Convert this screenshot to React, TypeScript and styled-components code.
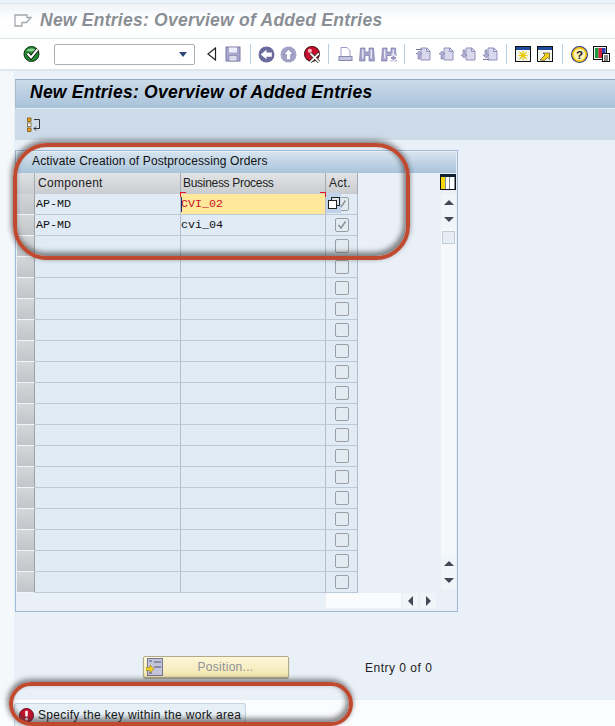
import styled, { createGlobalStyle } from "styled-components";

const GlobalStyle = createGlobalStyle`
  html, body { margin: 0; padding: 0; background: #e9f0f7; }
  body { font-family: "Liberation Sans", Arial, sans-serif; }
`;

const ROW_COUNT = 19;
const rows = [
  { component: "AP-MD", process: "CVI_02", checked: true, error: true },
  { component: "AP-MD", process: "cvi_04", checked: true, error: false },
];

const Page = styled.div`
  position: relative;
  width: 615px;
  height: 726px;
  overflow: hidden;
  display: flex;
  flex-direction: column;
  background: #e9f0f7;
`;

const TitleBar = styled.div`
  margin-top: 3px;
  border-top: 1px solid #e3e8ec;
  border-bottom: 1px solid #dde2e6;
  box-sizing: border-box;
  height: 36px;
  display: flex;
  align-items: center;
  gap: 8px;
  padding: 0 0 2px 14px;
  background: linear-gradient(#eef2f7, #ffffff 45%, #fdfefe);
`;

const WindowTitle = styled.div`
  font-size: 17.5px;
  letter-spacing: 0.25px;
  font-weight: bold;
  font-style: italic;
  color: #8a8f96;
  white-space: nowrap;
`;

const Toolbar = styled.div`
  height: 30px;
  border-bottom: 2px solid #e1e6ea;
  display: flex;
  align-items: center;
  background: #fff;
  padding-left: 21px;
  flex-shrink: 0;
`;

const Tool = styled.div<{ $w?: number }>`
  width: ${(p) => p.$w ?? 22}px;
  height: 22px;
  display: flex;
  align-items: center;
  justify-content: center;
  flex-shrink: 0;
`;

const Sep = styled.div`
  width: 1px;
  height: 20px;
  background: #b9cfe2;
  margin: 0 6px 0 5px;
  flex-shrink: 0;
`;

const Combo = styled.div`
  width: 141px;
  height: 21px;
  margin-left: 11px;
  margin-right: 8px;
  border: 1px solid #a9afb5;
  border-radius: 2px;
  background: #fff;
  display: flex;
  align-items: center;
  justify-content: flex-end;
  padding-right: 7px;
  box-sizing: border-box;
  flex-shrink: 0;
`;

const ComboArrow = styled.div`
  width: 0;
  height: 0;
  border-left: 4px solid transparent;
  border-right: 4px solid transparent;
  border-top: 5px solid #2c4a78;
`;

const Body = styled.div`
  flex: 1;
  display: flex;
  min-height: 0;
`;

const Rail = styled.div`
  width: 14px;
  background: #f5f8fb;
  flex-shrink: 0;
`;

const Main = styled.div`
  flex: 1;
  min-width: 0;
  padding: 8px 0 0 1px;
  display: flex;
  flex-direction: column;
`;

const PanelHeader = styled.div`
  height: 30px;
  box-sizing: border-box;
  border-top: 1px solid #93a9bc;
  border-left: 1px solid #a6bccf;
  border-bottom: 1px solid #e4edf5;
  display: flex;
  align-items: center;
  padding: 0 0 4px 14px;
  background: linear-gradient(#cbdbe9, #a9c2d9);
  font-size: 17.5px;
  letter-spacing: 0.25px;
  font-weight: bold;
  font-style: italic;
  color: #000;
`;

const SubToolbar = styled.div`
  height: 31px;
  background: #cddbe8;
  display: flex;
  align-items: center;
  padding-left: 12px;
  flex-shrink: 0;
`;

const GroupBox = styled.div`
  margin-top: 10px;
  width: 443px;
  height: 462px;
  box-sizing: border-box;
  border: 1px solid #9dbad8;
  padding: 1px;
  display: flex;
  flex-direction: column;
`;

const GroupTitle = styled.div`
  height: 21px;
  flex-shrink: 0;
  display: flex;
  align-items: center;
  padding: 0 0 3px 15px;
  box-sizing: border-box;
  font-size: 12px;
  letter-spacing: 0.13px;
  color: #111;
  background: linear-gradient(#d7e4ef, #a9c3da);
`;

const TableArea = styled.div`
  flex: 1;
  display: flex;
  min-height: 0;
`;

const Table = styled.div`
  width: 341px;
  flex-shrink: 0;
  display: flex;
  flex-direction: column;
`;

const HeaderRow = styled.div`
  display: flex;
  height: 21px;
  flex-shrink: 0;
`;

const Corner = styled.div`
  width: 18px;
  background: linear-gradient(#dfe1e3, #c9ccd0);
  border-right: 1px solid #a5aab0;
  box-sizing: border-box;
`;

const HeaderCell = styled.div<{ $w: number; $track: number; $pad: number }>`
  width: ${(p) => p.$w}px;
  box-sizing: border-box;
  border-right: 1px solid #a5aab0;
  background: linear-gradient(#e2e3e5, #c9ccd0);
  font-size: 12px;
  letter-spacing: ${(p) => p.$track}px;
  color: #222;
  padding: 3px 0 0 ${(p) => p.$pad}px;
  white-space: nowrap;
`;

const Row = styled.div`
  display: flex;
  height: 21px;
  flex-shrink: 0;
`;

const Selector = styled.div`
  width: 18px;
  box-sizing: border-box;
  background: linear-gradient(#d4d6d9, #c2c5c9);
  border-right: 1px solid #9da2a8;
  border-bottom: 1px solid #f2f4f6;
`;

const Cell = styled.div<{ $w: number; $pad: number; $error?: boolean }>`
  position: relative;
  width: ${(p) => p.$w}px;
  box-sizing: border-box;
  border-right: 1px solid #b4bec8;
  border-bottom: 1px solid #bccad7;
  background: ${(p) => (p.$error ? "#ffe89a" : "#e0ebf5")};
  color: ${(p) => (p.$error ? "#c8102e" : "#111")};
  font-family: "Liberation Mono", "Courier New", monospace;
  font-size: 11.7px;
  line-height: 20px;
  padding-left: ${(p) => p.$pad}px;
  white-space: pre;
`;

const ErrorMark = styled.div<{ $right?: boolean }>`
  position: absolute;
  ${(p) => (p.$right ? "right: -1px;" : "left: -1px;")}
  top: -2px;
  width: 5px;
  height: 4px;
  border-top: 1px solid #e8131f;
  ${(p) => (p.$right ? "border-right" : "border-left")}: 1px solid #e8131f;
`;

const Caret = styled.div`
  position: absolute;
  left: 0;
  top: 3px;
  width: 1px;
  height: 15px;
  background: #1a2a6c;
`;

const CheckCell = styled.div`
  position: relative;
  width: 32px;
  box-sizing: border-box;
  border-right: 1px solid #b4bec8;
  border-bottom: 1px solid #bccad7;
  background: #e0ebf5;
  display: flex;
  align-items: center;
  justify-content: center;
`;

const CheckBox = styled.div`
  width: 12px;
  height: 12px;
  border: 1px solid #9b9fa3;
  border-radius: 2px;
  background: #e3ebf2;
  display: flex;
  align-items: center;
  justify-content: center;
`;

const RestoreButton = styled.div`
  position: absolute;
  left: 0;
  top: -1px;
  width: 15px;
  height: 20px;
  background: #bfd3ea;
  display: flex;
  align-items: center;
  justify-content: center;
`;

const TableBottom = styled.div`
  display: flex;
  justify-content: flex-end;
  height: 16px;
`;

const HScrollRow = styled.div`
  display: flex;
  width: 110px;
  margin-right: -78px;
  flex-shrink: 0;
  position: relative;
`;

const HTrack = styled.div`
  width: 75px;
  height: 15px;
  background: #f9fbfd;
`;

const ScrollBtn = styled.div<{ $gap?: number }>`
  width: 15px;
  height: 15px;
  margin-left: ${(p) => p.$gap ?? 0}px;
  background: #f0f5f9;
  display: flex;
  align-items: center;
  justify-content: center;
  flex-shrink: 0;
`;

const VScrollBtn = styled(ScrollBtn)`
  height: 17px;
`;

const Arrow = styled.div<{ $dir: "up" | "down" | "left" | "right" }>`
  width: 0;
  height: 0;
  ${(p) =>
    p.$dir === "up"
      ? "border-left:5px solid transparent;border-right:5px solid transparent;border-bottom:5px solid #3f4a55;"
      : p.$dir === "down"
        ? "border-left:5px solid transparent;border-right:5px solid transparent;border-top:5px solid #3f4a55;"
        : p.$dir === "left"
          ? "border-top:5px solid transparent;border-bottom:5px solid transparent;border-right:5px solid #3f4a55;"
          : "border-top:5px solid transparent;border-bottom:5px solid transparent;border-left:5px solid #3f4a55;"}
`;

const ScrollColumn = styled.div`
  flex: 1;
  display: flex;
  flex-direction: column;
  align-items: flex-end;
  padding-bottom: 21px;
`;

const ConfigButton = styled.div`
  width: 16px;
  height: 16px;
  margin-bottom: 4px;
  border: 1px solid #111;
  box-sizing: border-box;
  display: flex;
  margin-top: 1px;
  flex-shrink: 0;
  background: #fff;
  border-top-width: 3px;
  border-top-color: #123;
`;

const ConfigStripe = styled.div<{ $c: string }>`
  flex: 1;
  background: ${(p) => p.$c};
  border-right: 1px solid #7f8f9f;
`;

const VTrack = styled.div`
  width: 15px;
  flex: 1;
  background: #f4f8fb;
  position: relative;
`;

const VThumb = styled.div`
  position: absolute;
  top: 3px;
  left: 1px;
  width: 13px;
  height: 13px;
  border: 1px solid #c1ccd6;
  box-sizing: border-box;
  background: #e6edf4;
`;

const Footer = styled.div`
  display: flex;
  align-items: flex-end;
  margin-top: 44px;
  padding-left: 128px;
  height: 22px;
`;

const PositionButton = styled.div`
  width: 146px;
  height: 22px;
  box-sizing: border-box;
  border: 1px solid #b1ab8c;
  border-radius: 2px;
  background: linear-gradient(#fdf7da, #f2e6ae);
  box-shadow: 0 1px 1px #a9a592;
  display: flex;
  align-items: center;
  color: #8d9198;
  font-size: 12px;
  letter-spacing: 0.3px;
`;

const PositionIcon = styled.div`
  width: 17px;
  height: 18px;
  margin-left: 2px;
  display: flex;
`;

const PositionLabel = styled.div`
  flex: 1;
  text-align: center;
`;

const EntryCount = styled.div`
  margin-left: 76px;
  font-size: 12px;
  color: #222;
  letter-spacing: 0.5px;
  line-height: 16px;
  margin-bottom: 2px;
`;

const StatusBar = styled.div`
  height: 26px;
  flex-shrink: 0;
  background: #fbfcfe;
  display: flex;
  align-items: flex-end;
  padding-left: 14px;
`;

const MessageTab = styled.div`
  width: 232px;
  height: 23px;
  box-sizing: border-box;
  border: 1px solid #c3d4e4;
  border-bottom: none;
  border-radius: 3px 3px 0 0;
  background: #e7eff6;
  display: flex;
  align-items: center;
  gap: 4px;
  padding-left: 4px;
  font-size: 12px;
  letter-spacing: 0.33px;
  color: #111;
  white-space: nowrap;
`;

const Callout = styled.div`
  position: absolute;
  box-sizing: border-box;
  border: 4px solid #bf4a30;
  pointer-events: none;
  box-shadow: -1px -2px 5px 1px rgba(60, 60, 60, 0.6), inset -2px -3px 5px 1px rgba(60, 60, 60, 0.6);
`;

const TableCallout = styled(Callout)`
  left: 13px;
  top: 143px;
  width: 397px;
  height: 117px;
  border-radius: 34px;
`;

const StatusCallout = styled(Callout)`
  left: 9px;
  top: 682px;
  width: 344px;
  height: 44px;
  border-radius: 22px;
`;

const Check = () => (
  <svg width="18" height="18" viewBox="0 0 18 18">
    <circle cx="8.5" cy="9" r="7.5" fill="#1f8a2f" stroke="#0c2d12" />
    <path d="M3 5.5a7 5 0 0 1 11 0a9 4 0 0 1-11 0z" fill="#8fd39a" />
    <path d="M4.5 8.5l3.5 4 6.5-8" fill="none" stroke="#111" strokeWidth="3.6" />
    <path d="M4.5 8.5l3.5 4 6.5-8" fill="none" stroke="#fff" strokeWidth="2" />
  </svg>
);

const BackTriangle = () => (
  <svg width="12" height="14" viewBox="0 0 12 14">
    <path d="M9.5 1L2 7l7.5 6z" fill="#fff" stroke="#222" strokeWidth="1.2" />
  </svg>
);

const Save = () => (
  <svg width="16" height="16" viewBox="0 0 16 16">
    <rect x="1" y="1" width="14" height="14" fill="#a9a6cf" stroke="#7d7aa8" />
    <rect x="4" y="1.5" width="8" height="5" fill="#eeeef8" />
    <rect x="4" y="9.5" width="8" height="5.5" fill="#dcdcec" stroke="#7d7aa8" strokeWidth="0.6" />
  </svg>
);

const NavCircle = ({ dir }: { dir: "left" | "up" }) => (
  <svg width="17" height="17" viewBox="0 0 16 16">
    <circle cx="8" cy="8" r="7.5" fill={dir === "left" ? "#6b6a9c" : "#a3a3c8"} />
    {dir === "left" ? (
      <path d="M2.5 8L8 3.5V6h5v4H8v2.5z" fill="#fff" />
    ) : (
      <path d="M8 3l4.5 5H10v5H6V8H3.5z" fill="#fff" stroke="#6b6a9c" strokeWidth="0.5" />
    )}
  </svg>
);

const CancelCircle = () => (
  <svg width="17" height="17" viewBox="0 0 16 16">
    <circle cx="7.5" cy="7.5" r="7" fill="#c8102e" stroke="#4a0a10" />
    <circle cx="5.5" cy="4.5" r="2" fill="#f7b5bd" />
    <path d="M6 7l8 8M14 7l-8 8" stroke="#333" strokeWidth="3" />
    <path d="M6 7l8 8M14 7l-8 8" stroke="#fff" strokeWidth="1.6" />
  </svg>
);

const Printer = () => (
  <svg width="15" height="16" viewBox="0 0 15 16">
    <path d="M3 1.5h6l3 3v6H3z" fill="#fff" stroke="#9e9cc4" />
    <rect x="1" y="10.5" width="13" height="4" fill="#c7c6e0" stroke="#8a88b2" />
  </svg>
);

const Binoculars = ({ plus }: { plus?: boolean }) => (
  <svg width="17" height="16" viewBox="0 0 17 16">
    <path d="M1.5 2h4.5v4h4V2h4.5l1 13h-5.5V9.5h-4V15H.5z" fill="#a6a4cd" stroke="#7c7aa8" strokeWidth="0.7" />
    <rect x="3" y="3.5" width="1.5" height="9" fill="#e5e5f3" />
    <rect x="11.5" y="3.5" width="1.5" height="9" fill="#e5e5f3" />
    {plus && <path d="M12.5 8.5v7M9 12h7" stroke="#fff" strokeWidth="4" />}
    {plus && <path d="M12.5 9.5v5M10 12h5" stroke="#9795c4" strokeWidth="2" />}
  </svg>
);

const PageArrow = ({ up, double }: { up: boolean; double?: boolean }) => (
  <svg width="16" height="14" viewBox="0 0 16 14">
    <path d="M6 1h6l3 3v9H6z" fill="#d9d8ec" stroke="#9391bd" />
    <path d="M11.5 1v3.5H15" fill="none" stroke="#9391bd" />
    <path
      d={up ? "M4 4l3 3H5v5H3V7H1z" : "M4 11L1 8h2V3h2v5h2z"}
      fill="#b7b6d8"
      stroke="#7775a4"
      strokeWidth="0.6"
    />
    {double && (
      <path d={up ? "M1 2.5h6" : "M1 12.5h6"} stroke="#7775a4" strokeWidth="1" />
    )}
  </svg>
);

const NewSession = () => (
  <svg width="16" height="16" viewBox="0 0 16 16">
    <rect x="0.5" y="0.5" width="15" height="15" fill="#f4f4ee" stroke="#111" />
    <rect x="1" y="1" width="14" height="3" fill="#1f4d9b" />
    <path d="M8 5v9M3.5 9.5h9M4.5 6l7 7M11.5 6l-7 7" stroke="#e7c900" strokeWidth="1.1" />
  </svg>
);

const Shortcut = () => (
  <svg width="16" height="16" viewBox="0 0 16 16">
    <rect x="0.5" y="0.5" width="15" height="15" fill="#f4f4ee" stroke="#111" />
    <rect x="1" y="1" width="14" height="3" fill="#1f4d9b" />
    <path d="M3 14l5-5-2-2h6.5v6.5l-2-2-3 3z" fill="#f4cf17" stroke="#333" strokeWidth="0.6" />
  </svg>
);

const Help = () => (
  <svg width="17" height="17" viewBox="0 0 16 16">
    <circle cx="8" cy="8" r="7.5" fill="#f8c30a" stroke="#24418a" />
    <circle cx="8" cy="8" r="5.5" fill="#fff3b5" />
    <text x="8" y="12" textAnchor="middle" fontSize="11" fontWeight="bold" fontFamily="Liberation Sans" fill="#222">?</text>
  </svg>
);

const Layout = () => (
  <svg width="17" height="16" viewBox="0 0 17 16">
    <rect x="0.5" y="0.5" width="13" height="13" fill="#eee" stroke="#111" />
    <rect x="2" y="2" width="3.5" height="10" fill="#1c9a3b" />
    <rect x="5.5" y="2" width="3.5" height="10" fill="#d21f3c" />
    <rect x="9" y="2" width="3.5" height="10" fill="#2d3fb8" />
    <rect x="9.5" y="7.5" width="7" height="8" fill="#fff" stroke="#111" />
    <path d="M11 10h4M11 12h4M11 14h4" stroke="#111" />
  </svg>
);

const SelectTree = () => (
  <svg width="14" height="16" viewBox="0 0 14 16">
    <rect x="0.5" y="1" width="3.5" height="3.5" fill="#f0a020" stroke="#6b4a10" strokeWidth="0.7" />
    <rect x="0.5" y="6" width="3.5" height="3.5" fill="#fff" stroke="#6b4a10" strokeWidth="0.7" />
    <rect x="0.5" y="11" width="3.5" height="3.5" fill="#f0a020" stroke="#6b4a10" strokeWidth="0.7" />
    <path d="M7 2.5h5.5v9H7M9 9.5l-2 2 2 2" fill="none" stroke="#222" strokeWidth="0.9" />
  </svg>
);

const TitleIcon = () => (
  <svg width="18" height="15" viewBox="0 0 18 15">
    <path d="M1 2h12v2.5h4l-4.5 5H8V13H1z" fill="none" stroke="#a2a7ad" strokeWidth="1.3" />
  </svg>
);

const Restore = () => (
  <svg width="12" height="12" viewBox="0 0 12 12">
    <rect x="3.5" y="0.5" width="8" height="8" fill="#dde4ec" stroke="#222" />
    <rect x="0.5" y="3.5" width="8" height="8" fill="#fff" stroke="#222" />
  </svg>
);

const CheckMark = () => (
  <svg width="10" height="10" viewBox="0 0 10 10">
    <path d="M1.5 5l2.5 3 4.5-6.5" fill="none" stroke="#8a8f94" strokeWidth="1.5" />
  </svg>
);

const ErrorIcon = () => (
  <svg width="15" height="15" viewBox="0 0 15 15">
    <circle cx="7.5" cy="7.5" r="7" fill="#c8102e" stroke="#5a0d18" />
    <rect x="6.2" y="2.8" width="2.6" height="6" rx="1" fill="#fff" />
    <circle cx="7.5" cy="11.2" r="1.4" fill="#fff" />
  </svg>
);

const PositionGlyph = () => (
  <svg width="17" height="18" viewBox="0 0 17 18">
    <rect x="1.5" y="0.5" width="15" height="17" fill="#c3c4da" stroke="#77768f" />
    <path d="M8 4h7M8 9h7" stroke="#55556f" />
    <path d="M3 3h3M3 15h3" stroke="#55556f" />
    <path d="M0 9.5h4V7l4 4-4 4v-2.5H0z" fill="#f2cf1c" stroke="#8a7612" strokeWidth="0.5" />
  </svg>
);

export default function App() {
  const tableRows = Array.from({ length: ROW_COUNT }, (_, i) => rows[i] ?? null);

  return (
    <>
      <GlobalStyle />
      <Page>
        <TitleBar>
          <TitleIcon />
          <WindowTitle>New Entries: Overview of Added Entries</WindowTitle>
        </TitleBar>
        <Toolbar>
          <Tool><Check /></Tool>
          <Combo><ComboArrow /></Combo>
          <Tool $w={18}><BackTriangle /></Tool>
          <Tool $w={24}><Save /></Tool>
          <Sep />
          <Tool $w={18}><NavCircle dir="left" /></Tool>
          <Tool $w={26}><NavCircle dir="up" /></Tool>
          <Tool><CancelCircle /></Tool>
          <Sep />
          <Tool $w={20}><Printer /></Tool>
          <Tool $w={24}><Binoculars /></Tool>
          <Tool $w={20}><Binoculars plus /></Tool>
          <Sep />
          <Tool $w={24}><PageArrow up double /></Tool>
          <Tool><PageArrow up /></Tool>
          <Tool><PageArrow up={false} /></Tool>
          <Tool><PageArrow up={false} double /></Tool>
          <Sep />
          <Tool $w={20}><NewSession /></Tool>
          <Tool $w={24}><Shortcut /></Tool>
          <Sep />
          <Tool $w={20}><Help /></Tool>
          <Tool $w={24}><Layout /></Tool>
        </Toolbar>
        <Body>
          <Rail />
          <Main>
            <PanelHeader>New Entries: Overview of Added Entries</PanelHeader>
            <SubToolbar><SelectTree /></SubToolbar>
            <GroupBox>
              <GroupTitle>Activate Creation of Postprocessing Orders</GroupTitle>
              <TableArea>
                <Table>
                  <HeaderRow>
                    <Corner />
                    <HeaderCell $w={146} $track={0.3} $pad={3}>Component</HeaderCell>
                    <HeaderCell $w={145} $track={-0.3} $pad={2}>Business Process</HeaderCell>
                    <HeaderCell $w={32} $track={0.3} $pad={3}>Act.</HeaderCell>
                  </HeaderRow>
                  {tableRows.map((row, i) => (
                    <Row key={i}>
                      <Selector />
                      <Cell $w={146} $pad={1}>{row?.component}</Cell>
                      <Cell $w={145} $pad={0} $error={row?.error}>
                        {row?.process}
                        {row?.error && <ErrorMark />}
                        {row?.error && <ErrorMark $right />}
                        {row?.error && <Caret />}
                      </Cell>
                      <CheckCell>
                        <CheckBox>{row?.checked && <CheckMark />}</CheckBox>
                        {row?.error && <RestoreButton><Restore /></RestoreButton>}
                      </CheckCell>
                    </Row>
                  ))}
                  <TableBottom>
                    <HScrollRow>
                      <HTrack />
                      <ScrollBtn $gap={2}><Arrow $dir="left" /></ScrollBtn>
                      <ScrollBtn $gap={3}><Arrow $dir="right" /></ScrollBtn>
                    </HScrollRow>
                  </TableBottom>
                </Table>
                <ScrollColumn>
                  <ConfigButton>
                    <ConfigStripe $c="#f5d90a" />
                    <ConfigStripe $c="#fff" />
                    <ConfigStripe $c="#fff" />
                  </ConfigButton>
                  <VScrollBtn><Arrow $dir="up" /></VScrollBtn>
                  <VScrollBtn><Arrow $dir="down" /></VScrollBtn>
                  <VTrack><VThumb /></VTrack>
                  <VScrollBtn><Arrow $dir="up" /></VScrollBtn>
                  <VScrollBtn><Arrow $dir="down" /></VScrollBtn>
                </ScrollColumn>
              </TableArea>
            </GroupBox>
            <Footer>
              <PositionButton>
                <PositionIcon><PositionGlyph /></PositionIcon>
                <PositionLabel>Position...</PositionLabel>
              </PositionButton>
              <EntryCount>Entry 0 of 0</EntryCount>
            </Footer>
          </Main>
        </Body>
        <StatusBar>
          <MessageTab>
            <ErrorIcon />
            Specify the key within the work area
          </MessageTab>
        </StatusBar>
        <TableCallout />
        <StatusCallout />
      </Page>
    </>
  );
}
